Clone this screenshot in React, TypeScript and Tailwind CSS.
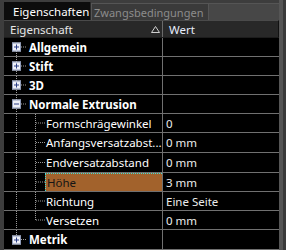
import React from 'react';

type Row = {
  label: string;
  value?: string;
  group?: boolean;
  open?: boolean;
  first?: boolean;
  lastGroup?: boolean;
  lastChild?: boolean;
  selected?: boolean;
  h: string;
};

const rows: Row[] = [
  { label: 'Allgemein', group: true, first: true, h: 'h-[19px]' },
  { label: 'Stift', group: true, h: 'h-[19px]' },
  { label: '3D', group: true, h: 'h-[19px]' },
  { label: 'Normale Extrusion', group: true, open: true, h: 'h-[19px]' },
  { label: 'Formschrägewinkel', value: '0', h: 'h-[19px]' },
  { label: 'Anfangsversatzabst...', value: '0 mm', h: 'h-[20px]' },
  { label: 'Endversatzabstand', value: '0 mm', h: 'h-[20px]' },
  { label: 'Höhe', value: '3 mm', selected: true, h: 'h-[19px]' },
  { label: 'Richtung', value: 'Eine Seite', h: 'h-[19px]' },
  { label: 'Versetzen', value: '0 mm', lastChild: true, h: 'h-[19px]' },
  { label: 'Metrik', group: true, lastGroup: true, h: 'h-[20px]' },
];

const dot = '#9a9a9a';

function Expander({ open }: { open?: boolean }) {
  return (
    <div className="absolute left-[8px] top-1/2 -translate-y-1/2 w-[9px] h-[9px] border border-[#8e9ab8] bg-[#eef0f8] flex items-center justify-center">
      <svg width="7" height="7" viewBox="0 0 7 7">
        <rect x="1" y="3" width="5" height="1" fill="#2c3f86" />
        {!open && <rect x="3" y="1" width="1" height="5" fill="#2c3f86" />}
      </svg>
    </div>
  );
}

function TreeLines({ row }: { row: Row }) {
  if (row.group) {
    return (
      <div className="relative w-[24px] h-full shrink-0">
        <svg className="absolute inset-0" width="24" height="100%">
          <line
            x1="12.5"
            y1={row.first ? '50%' : '0'}
            x2="12.5"
            y2={row.lastGroup ? '50%' : '100%'}
            stroke={dot}
            strokeDasharray="1 1"
          />
          <line x1="17" y1="50%" x2="23" y2="50%" stroke={dot} strokeDasharray="1 1" />
        </svg>
        <Expander open={row.open} />
      </div>
    );
  }
  return (
    <div className="relative w-[41px] h-full shrink-0">
      <svg className="absolute inset-0" width="41" height="100%">
        <line x1="12.5" y1="0" x2="12.5" y2="100%" stroke={dot} strokeDasharray="1 1" />
        <line x1="31.5" y1="0" x2="31.5" y2={row.lastChild ? '50%' : '100%'} stroke={dot} strokeDasharray="1 1" />
        <line x1="32" y1="50%" x2="41" y2="50%" stroke={dot} strokeDasharray="1 1" />
      </svg>
    </div>
  );
}

export default function App() {
  return (
    <div
      className="w-[286px] h-[250px] bg-[#3d3d3d] flex overflow-hidden text-[11.5px] leading-[15px]"
      style={{ fontFamily: '"Noto Sans", "Open Sans", sans-serif' }}
    >
      <div className="w-[279px] pl-[4px] flex flex-col">
        {/* tabs */}
        <div className="h-[20px] flex items-end shrink-0">
          <div className="h-[18px] w-[87px] bg-[#0c0c0c] text-white flex items-center pl-[9px] border-r border-[#2a2a2a] whitespace-nowrap">
            Eigenschaften
          </div>
          <div className="h-[17px] w-[118px] bg-[#3a3a3a] text-[#8c8c8c] flex items-center pl-[2px] border border-b-0 border-[#555] whitespace-nowrap text-[11px]">
            Zwangsbedingungen
          </div>
          <div className="h-[17px] flex-1 bg-[#474747] border-t border-[#555]" />
        </div>
        {/* header */}
        <div className="h-[17px] flex bg-[#282828] border-t border-[#4a4a4a] border-r border-r-[#111] text-[#e6e6e6] shrink-0">
          <div className="w-[159px] flex items-center pl-[6px] relative border-r border-[#6a6a6a]">
            Eigenschaft
            <svg className="absolute left-[147px] top-[5px]" width="9" height="7" viewBox="0 0 9 7">
              <path d="M4.5 0.5 L8.5 6.5 H0.5 Z" fill="none" stroke="#cfcfcf" />
            </svg>
          </div>
          <div className="flex items-center pl-[6px] text-[#e8eefc]">Wert</div>
        </div>
        {/* rows */}
        <div className="flex-1 bg-black border-t border-[#1c1c1c]">
          {rows.map((row) => (
            <div key={row.label} className={`flex ${row.h} border-b border-[#707070]`}>
              <div className="w-[159px] flex border-r border-[#707070] shrink-0">
                <TreeLines row={row} />
                <div
                  className={`flex-1 min-w-0 flex items-center whitespace-nowrap ${
                    row.group
                      ? 'font-bold text-white pl-[1px]'
                      : row.selected
                      ? 'bg-[#a2622c] text-[#151515] pl-[1px] border-t border-l border-dotted border-[#3ee0d8]'
                      : 'text-white pl-[1px]'
                  }`}
                >
                  {row.label}
                </div>
              </div>
              <div className="flex-1 flex items-center pl-[3px] text-[#ececec] whitespace-nowrap">{row.value}</div>
            </div>
          ))}
        </div>
      </div>
      <div className="flex-1 flex">
        <div className="w-[4px] bg-[#555]" />
        <div className="flex-1 bg-[#3a3a3a]" />
      </div>
    </div>
  );
}
